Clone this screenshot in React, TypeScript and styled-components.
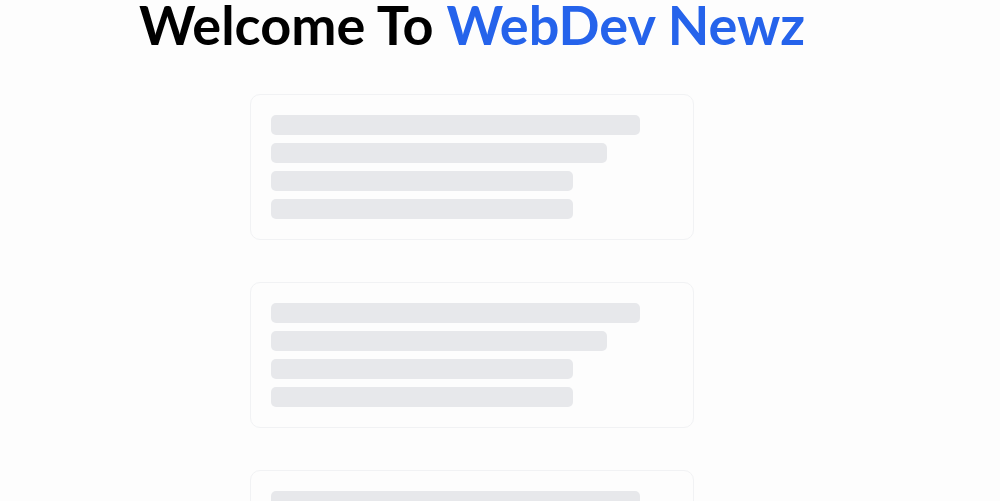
import React from "react";
import styled, { createGlobalStyle } from "styled-components";

const Global = createGlobalStyle`
  html, body { margin: 0; padding: 0; background: #fdfdfd; }
  body { font-family: "Lato", "Noto Sans", sans-serif; overflow: hidden; }
`;

const Main = styled.main`
  width: 944px;
  display: flex;
  flex-direction: column;
  align-items: center;
`;

const Title = styled.h1`
  margin: 0;
  font-family: "Lato", "Noto Sans", sans-serif;
  font-weight: 700;
  font-size: 54px;
  line-height: 50px;
  color: #000;
  white-space: nowrap;
`;

const Accent = styled.span`
  color: #2563eb;
`;

const Stack = styled.div`
  margin-top: 44px;
  display: flex;
  flex-direction: column;
  gap: 42px;
`;

const Card = styled.div`
  width: 444px;
  box-sizing: border-box;
  padding: 20px;
  border: 1px solid #f1f2f4;
  border-radius: 10px;
  background: #fdfdfd;
  display: flex;
  flex-direction: column;
  gap: 8px;
`;

const Bar = styled.div<{ $w: number }>`
  width: ${(p) => p.$w}px;
  height: 20px;
  border-radius: 5px;
  background: #e7e8eb;
`;

const widths = [369, 336, 302, 302];

export default function App() {
  return (
    <>
      <Global />
      <Main>
        <Title>
          Welcome To <Accent>WebDev Newz</Accent>
        </Title>
        <Stack>
          {[0, 1, 2].map((c) => (
            <Card key={c}>
              {widths.map((w, i) => (
                <Bar key={i} $w={w} />
              ))}
            </Card>
          ))}
        </Stack>
      </Main>
    </>
  );
}
